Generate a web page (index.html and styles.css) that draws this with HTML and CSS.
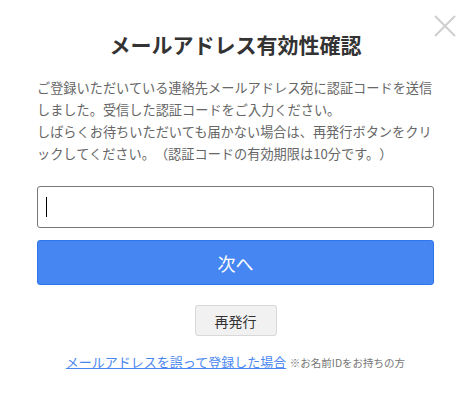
FILE: index.html
```html
<!DOCTYPE html>
<html lang="ja">
<head>
    <meta charset="utf-8">
    <title>メールアドレス有効性確認</title>
    <link rel="stylesheet" href="styles.css">
</head>
<body>
    <div class="modal">
        <button class="close" aria-label="閉じる">
            <svg width="22" height="22" viewBox="0 0 22 22"><path d="M1 1L21 21M21 1L1 21" stroke="#cfcfcf" stroke-width="2" fill="none"/></svg>
        </button>
        <h1 class="title">メールアドレス有効性確認</h1>
        <p class="lead">ご登録いただいている連絡先メールアドレス宛に認証コードを送信しました。受信した認証コードをご入力ください。<br>しばらくお待ちいただいても届かない場合は、再発行ボタンをクリックしてください。（認証コードの有効期限は10分です。）</p>
        <div class="code-box"><span class="caret"></span></div>
        <button class="next">次へ</button>
        <div class="resend-row">
            <button class="resend">再発行</button>
        </div>
        <div class="help">
            <a href="#" class="help-link">メールアドレスを誤って登録した場合</a>
            <span class="note">※お名前IDをお持ちの方</span>
        </div>
    </div>
</body>
</html>
```

FILE: styles.css
```css
body {
    margin: 0;
    background-color: #fff;
    font-family: "Noto Sans CJK JP", sans-serif;
    color: #555;
}

.modal {
    position: relative;
    padding: 28px 39px 0 37px;
}

.close {
    position: absolute;
    top: 15px;
    right: 17px;
    padding: 0;
    border: none;
    background: none;
    line-height: 0;
}

.title {
    margin: 0;
    font-size: 21px;
    line-height: 32px;
    font-weight: bold;
    color: #333;
    text-align: center;
}

.lead {
    margin: 17px 0 0 0;
    font-size: 13.2px;
    line-height: 22px;
    color: #666;
    line-break: loose;
    text-spacing-trim: space-all;
}

.code-box {
    margin-top: 21px;
    height: 40px;
    border: 1px solid #777;
    border-radius: 3px;
    display: flex;
    align-items: center;
    padding-left: 8px;
}

.caret {
    width: 1px;
    height: 20px;
    background-color: #000;
}

.next {
    display: block;
    width: 100%;
    margin-top: 12px;
    height: 45px;
    border: 1px solid #2f76ec;
    border-radius: 3px;
    background-color: #4586f2;
    color: #fff;
    font-family: inherit;
    font-size: 18px;
}

.resend-row {
    margin-top: 20px;
    text-align: center;
}

.resend {
    width: 82px;
    height: 31px;
    border: 1px solid #d8d8d8;
    border-radius: 3px;
    background-color: #f1f1f1;
    color: #333;
    font-family: inherit;
    font-size: 14px;
}

.help {
    margin-top: 12px;
    text-align: center;
}

.help-link {
    font-size: 13px;
    color: #4a86f0;
}

.note {
    font-size: 10.5px;
    color: #777;
}
```
